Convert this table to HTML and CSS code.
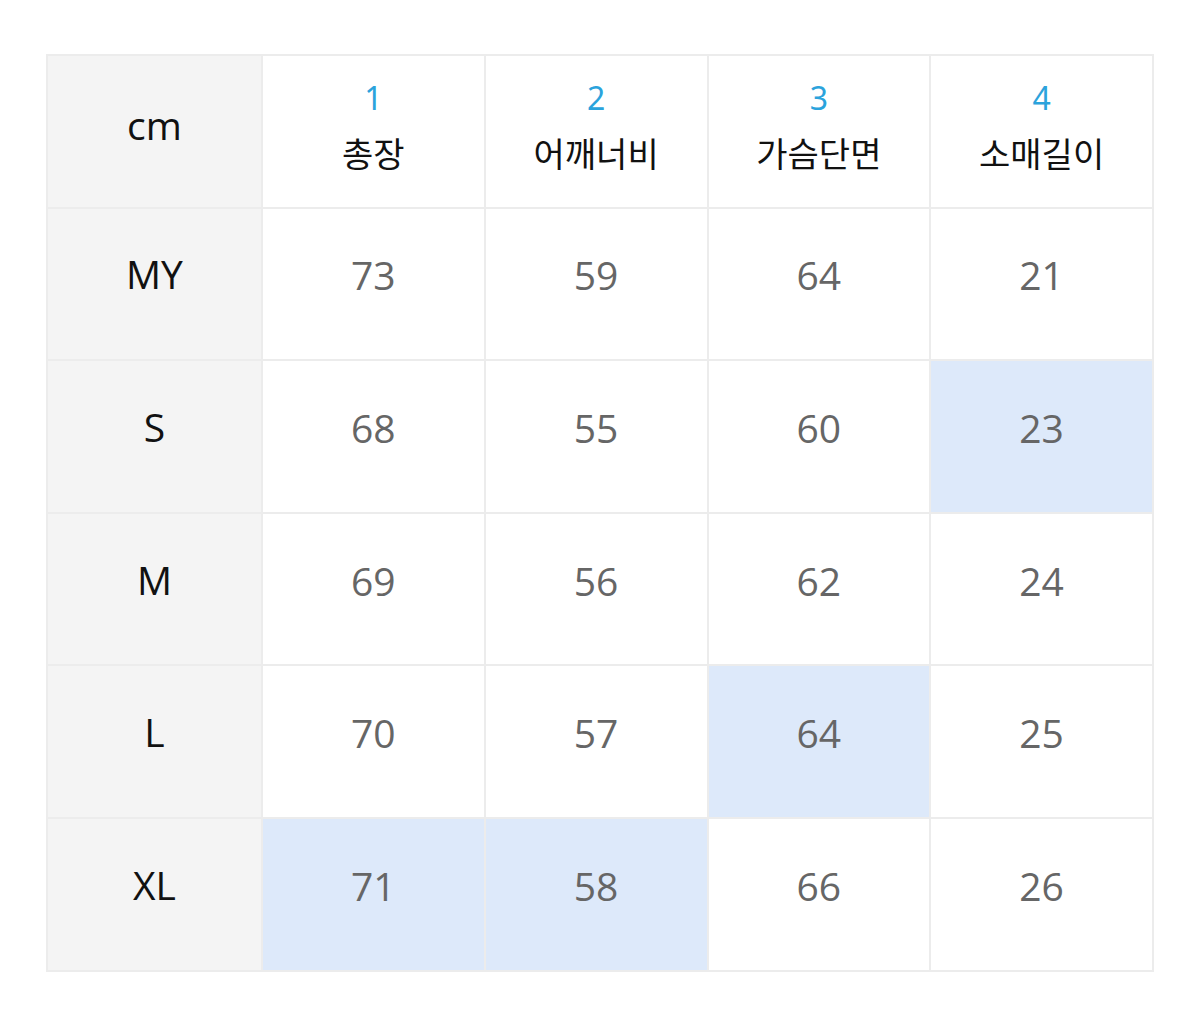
FILE: index.html
```html
<!DOCTYPE html>
<html lang="ko">
<head>
<meta charset="utf-8">
<link rel="stylesheet" href="styles.css">
</head>
<body>
<table class="size-table">
  <colgroup><col class="c-label"><col><col><col><col></colgroup>
  <thead>
    <tr>
      <th class="label">cm</th>
      <th><span class="num">1</span><span class="name">총장</span></th>
      <th><span class="num">2</span><span class="name">어깨너비</span></th>
      <th><span class="num">3</span><span class="name">가슴단면</span></th>
      <th><span class="num">4</span><span class="name">소매길이</span></th>
    </tr>
  </thead>
  <tbody>
    <tr><th class="label">MY</th><td>73</td><td>59</td><td>64</td><td>21</td></tr>
    <tr><th class="label">S</th><td>68</td><td>55</td><td>60</td><td class="hl">23</td></tr>
    <tr><th class="label">M</th><td>69</td><td>56</td><td>62</td><td>24</td></tr>
    <tr><th class="label">L</th><td>70</td><td>57</td><td class="hl">64</td><td>25</td></tr>
    <tr><th class="label">XL</th><td class="hl">71</td><td class="hl">58</td><td>66</td><td>26</td></tr>
  </tbody>
</table>
</body>
</html>
```
FILE: styles.css
```css
html, body {
  margin: 0;
  background: #fff;
}
body {
  padding: 54px 46px 0 46px;
  font-family: "Open Sans", "Noto Sans CJK KR", sans-serif;
}
.size-table {
  width: 1108px;
  border-collapse: collapse;
  table-layout: fixed;
  border: 2px solid #ebebeb;
}
.c-label { width: 215px; }
.size-table tr { height: 152.6px; }
.size-table th,
.size-table td {
  border: 2px solid #ececec;
  text-align: center;
  vertical-align: middle;
  padding: 0 0 18px 0;
  background: #fff;
}
.size-table th.label {
  background: #f4f4f4;
  color: #111;
  font-weight: 400;
  font-size: 39px;
  padding-bottom: 20px;
}
.size-table thead th.label { padding-bottom: 14px; }
.size-table td {
  color: #666;
  font-size: 39px;
}
.size-table td.hl { background: #dde9fa; }
.size-table thead th {
  font-weight: 400;
  padding: 0 0 6px 0;
}
.num {
  display: block;
  color: #2ba3dc;
  font-size: 32px;
  line-height: 50px;
  font-family: "Noto Sans", sans-serif;
}
.name {
  display: block;
  color: #111;
  font-size: 34px;
  line-height: 60px;
  font-family: "Noto Sans CJK KR", sans-serif;
  font-weight: 400;
}
```
